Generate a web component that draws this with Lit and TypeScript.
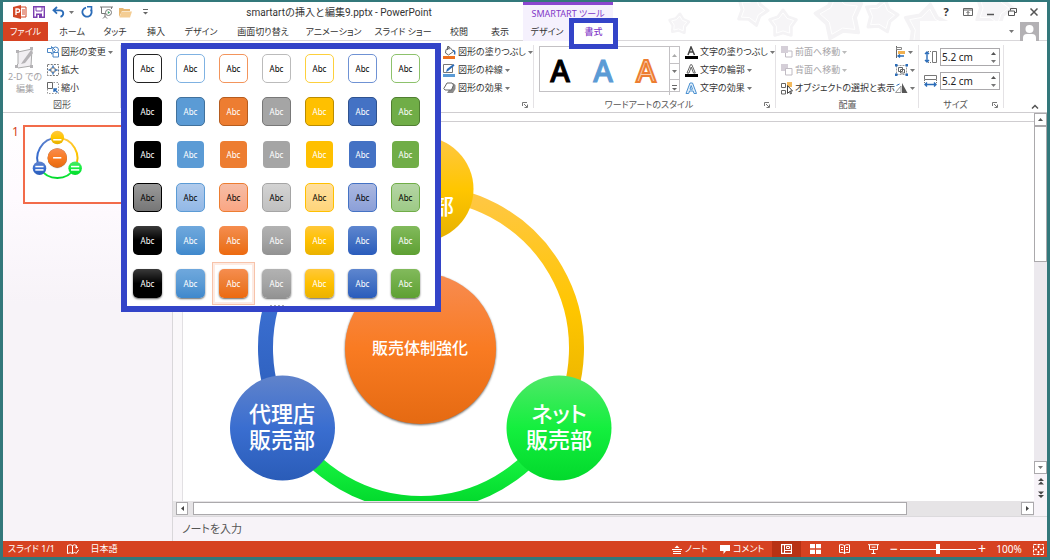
import { LitElement, html, svg, css, nothing } from "lit";
import { customElement, property } from "lit/decorators.js";
import { classMap } from "lit/directives/class-map.js";

const starPoints = (cx: number, cy: number, r: number, turn: number) =>
  Array.from({ length: 10 }, (_, i) => {
    const a = ((i * 36 - 90 + turn) * Math.PI) / 180;
    const d = i % 2 ? r * 0.62 : r;
    return `${(cx + d * Math.cos(a)).toFixed(1)},${(cy + d * Math.sin(a)).toFixed(1)}`;
  }).join(" ");

/* ---------- icons ---------- */
const icon = (w: number, h: number, body: unknown) =>
  html`<svg width=${w} height=${h} viewBox="0 0 ${w} ${h}" fill="none" aria-hidden="true">${body}</svg>`;

const caret = html`<svg class="caret" width="5" height="3" viewBox="0 0 5 3" aria-hidden="true"><path d="M0 0h5L2.5 3z" fill="currentColor" /></svg>`;
const caretUp = html`<svg width="5" height="3" viewBox="0 0 5 3" aria-hidden="true"><path d="M0 3h5L2.5 0z" fill="currentColor" /></svg>`;

const I = {
  ppt: icon(14, 14, svg`<path d="M0 2l8-2v14l-8-2z" fill="#d24726"/><path d="M8 2h5v10H8" stroke="#d24726"/><path d="M3 10V4h2a1.6 1.6 0 010 3.4H3" stroke="#fff" stroke-width="1.3"/><path d="M9 5h3M9 7h3M9 9h3" stroke="#d24726"/>`),
  save: icon(12, 12, svg`<path d="M.7.7h10.6v10.6H.7z" stroke="#7b3fb0" stroke-width="1.4"/><path d="M3 1h6v4H3z" fill="#fff" stroke="#7b3fb0"/><path d="M3 7.5h6V12H3z" fill="#7b3fb0"/><path d="M4.5 9h1.5v3H4.5z" fill="#fff"/>`),
  undo: icon(13, 12, svg`<path d="M5 1L1.5 4.3 5 7.6M2 4.3h6c4 0 4.5 5 .5 6.5" stroke="#2b6cb8" stroke-width="1.8"/>`),
  redo: icon(12, 12, svg`<path d="M9.8 3.5A4.6 4.6 0 115 1.6" stroke="#2b6cb8" stroke-width="1.8"/><path d="M6 .8h4.5v4.5" stroke="#2b6cb8" stroke-width="1.6"/>`),
  show: icon(13, 13, svg`<path d="M0 1h13M1.5 1v6.5H6M11.5 1v2M5 8v3M3 12.5l2-2 2 2" stroke="#777"/><circle cx="8.5" cy="6.5" r="3" fill="#fff" stroke="#777"/><path d="M7.8 5v3l2.4-1.5z" fill="#3b9b60"/>`),
  folder: icon(13, 11, svg`<path d="M0 10V1h4l1 1h6v2H3z" fill="#e8b873"/><path d="M2.5 4.5H13L11 10.5H.5z" fill="#f4cd93"/>`),
  more: icon(5, 6, svg`<path d="M0 .5h5" stroke="#666"/><path d="M0 3h5L2.5 5.5z" fill="#666"/>`),
  edit2d: icon(22, 25, svg`<path d="M4 6l14-3-1 17-13 2-2-2 2-2z" stroke="#aaa" fill="#f1eff2"/><path d="M17 4l-8 11-2 3 4-1 8-10z" fill="#b5b3b6"/><path d="M2 4h3v3H2zM16 1h3v3h-3zM16 19h3v3h-3zM1 19h3v3H1z" fill="#b5b3b6"/>`),
  change: icon(12, 12, svg`<path d="M.5 2.5h4v-2L8.500 4.500 4.500 8V6.500h-4z" stroke="#4a86c5" fill="#fff"/><circle cx="8.500" cy="4" r="3" stroke="#4a86c5"/><path d="M6 6.500h5.500v4.500H6z" stroke="#4a86c5" fill="#fff"/>`),
  grow: icon(12, 12, svg`<path d="M.5.5h11v11H.5z" stroke="#777" stroke-dasharray="2 1.2"/><path d="M4 4h4v4H4z" stroke="#777" fill="#fff"/><path d="M1.5 6H4M8 6h2.5M6 1.5V4M6 8v2.5" stroke="#2b6cb8" stroke-width="1.4"/>`),
  shrink: icon(12, 12, svg`<path d="M.5.5h11v11H.5z" stroke="#999" stroke-dasharray="1.5 1.5"/><path d="M.5.5h5v6h-5z" stroke="#666" fill="#fff"/><path d="M10.5 10.5L7 7M7 10V7h3" stroke="#2b6cb8" stroke-width="1.4"/>`),
  fill: icon(13, 13, svg`<path d="M3 3.5l4-2 3.5 4-5 3.5-3-2z" stroke="#666" fill="#fff"/><path d="M4.500 4V.5H6v3" stroke="#666"/><path d="M10 4.5c2 0 2 2 1.5 4" stroke="#2b6cb8" stroke-width="1.5"/><path d="M0 10h12v3H0z" fill="#ed7020"/>`),
  line: icon(13, 13, svg`<path d="M.5.5h9v8h-9z" stroke="#777"/><path d="M3 8l1-3 6.5-5 1 1.5L5 7z" fill="#2b6cb8"/><path d="M0 10h12v3H0z" fill="#5b9bd5"/>`),
  effect: icon(13, 12, svg`<path d="M4 11h6l2.5-4V3L10 1z" fill="#8b8b8b"/><path d="M4 1h5l1.5 2-2 5H2L.8 6.5z" fill="#fff" stroke="#666"/>`),
  txtFill: icon(13, 13, svg`<path d="M3 9L6 1l3.5 8M4 6h4.5" stroke="#444" stroke-width="1.5"/><path d="M0 10h13v3H0z" fill="#000"/>`),
  txtLine: icon(13, 13, svg`<path d="M2 9L5.5.7h1.3L10.3 9H8.500L6.2 3 4 9z" stroke="#666"/><path d="M0 10h13v3H0z" fill="#000"/>`),
  txtFx: icon(13, 13, svg`<path d="M1 11.5L5 1h2.5l4 10.5H9L8.2 9H4.5l-.8 2.5z" stroke="#4a90d0" fill="#e6f1fb"/><path d="M5 7.2h2.5L6.2 3.5z" stroke="#4a90d0" fill="#fff"/>`),
  front: icon(12, 12, svg`<path d="M0 0h7v7H0z" fill="#d5cfd8"/><path d="M7 5h4v6H4.5V7" stroke="#c0bbc3"/>`),
  back: icon(12, 12, svg`<path d="M0 0h7v7H0z" fill="#d5cfd8"/><path d="M4.5 4.5h6.5v6.5H4.5z" fill="#fff" stroke="#c0bbc3"/>`),
  pane: icon(12, 13, svg`<path d="M.5 1.5h4v4h-4zM.5 8.5h4v3.500h-4z" stroke="#666"/><path d="M6 0h5v5H6z" fill="#f3b95c"/><path d="M6.500 3.500v8l2-2 1 2.500 1-.5-1-2.500h2z" stroke="#444" fill="#fff"/>`),
  align: icon(11, 12, svg`<path d="M1.5 0v12" stroke="#666"/><path d="M1.500 1.500h5v2h-5z" stroke="#888"/><path d="M3 5h7v3H3z" fill="#f0b050"/><path d="M3 10h6M5 8.5L3 10l2 1.5" stroke="#2b6cb8" stroke-width="1.3"/>`),
  group: icon(13, 12, svg`<path d="M1.5 1.5h10v9h-10z" stroke="#999" stroke-dasharray="2 1"/><path d="M3.5 3.5h4v4h-4zM5.5 5.5h4v3.500h-4z" stroke="#666"/><path d="M0 0h2.5v2.5H0zM10.5 0H13v2.5h-2.5zM0 9.5h2.5V12H0zM10.5 9.5H13V12h-2.5z" fill="#2b6cb8"/>`),
  rotate: icon(13, 10, svg`<path d="M.5 9.5L6 3v6.5z" stroke="#999"/><path d="M7 0l5.5 10H7z" fill="#555"/><path d="M1.5 2.5L4.5 1" stroke="#2b6cb8"/>`),
  height: icon(13, 12, svg`<path d="M3 .5v11M1 3l2-2 2 2M1 9l2 2 2-2" stroke="#2b6cb8" stroke-width="1.4"/><path d="M8.5.5h4v11h-4z" stroke="#777"/><path d="M4 .5h4M4 11.5h4" stroke="#777" stroke-dasharray="1 1"/>`),
  width: icon(13, 12, svg`<path d="M.5.5h12v4H.5z" stroke="#777"/><path d="M.5 5v3M12.5 5v3" stroke="#777" stroke-dasharray="1 1"/><path d="M.5 9.500h12M3 7.500l-2 2 2 2M10 7.500l2 2-2 2" stroke="#2b6cb8" stroke-width="1.4"/>`),
  launch: icon(6, 6, svg`<path d="M.5 4V.5H5M2 2l3 3M5.5 2.5v3h-3" stroke="#777"/>`),
  ribbonOpt: icon(10, 8, svg`<path d="M.5.5h9v7h-9z" stroke="#666"/><path d="M.5 2h9M5 7V3.5M3.5 5L5 3.5 6.5 5" stroke="#666"/>`),
  min: icon(8, 8, svg`<path d="M1 6.500h7" stroke="#555" stroke-width="1.5"/>`),
  restore: icon(9, 8, svg`<path d="M2.5 2.5V.5h6v4h-2" stroke="#555"/><path d="M.5 3h6v4.500h-6z" stroke="#555"/>`),
  close: icon(8, 8, svg`<path d="M.5.5l7 7M7.5.5l-7 7" stroke="#555" stroke-width="1.500"/>`),
  up: icon(8, 5, svg`<path d="M1 4.500L4 1.500l3 3" stroke="#555" stroke-width="1.500"/>`),
  avatar: icon(19, 19, svg`<path d="M0 0h19v19H0z" fill="#b3b1b4"/><circle cx="9.500" cy="7" r="4" fill="#fff"/><path d="M3 19v-3q0-4 4-4h5q4 0 4 4v3z" fill="#fff"/>`),
  spell: icon(12, 11, svg`<path d="M.5 1.5q3-1.500 5 0v8q-2-1.500-5 0zM5.5 1.5q2-1.500 4 0v3M5.5 9.500l2-1" stroke="#fff"/><path d="M7.500 8l1.500 1.500L12 5.500M8 3l3 .5" stroke="#fff"/>`),
  notes: icon(10, 9, svg`<path d="M2.5 3L5 .5 7.5 3z" fill="#fff"/><path d="M0 4.500h10M1 6.500h8M1 8.500h8" stroke="#fff"/>`),
  comment: icon(10, 9, svg`<path d="M0 0h10v6H6L3.5 9V6H0z" fill="#fff"/>`),
  normal: icon(11, 10, svg`<path d="M.5.5h10v9H.5z" stroke="#fff" stroke-width="1.3"/><path d="M3.5 0v10M4 6.500h6" stroke="#fff"/><path d="M5.500 2.500h3v2h-3z" stroke="#fff"/>`),
  sorter: icon(11, 10, svg`<path d="M0 0h5v4.3H0zM6 0h5v4.3H6zM0 5.7h5V10H0zM6 5.7h5V10H6z" fill="#fff"/>`),
  read: icon(11, 10, svg`<path d="M.5.8q3-.6 5 .7 2-1.300 5-.7v7.700q-3-.6-5 .7-2-1.300-5-.7zM5.500 1.500V10M2 3.500h2M2 5.500h2M7 3.500h2M7 5.500h2" stroke="#fff"/>`),
  present: icon(11, 10, svg`<path d="M0 .7h11M1.500 1v4.500h8V1M3.500 3.200h4M5.500 6v3.500M3.500 9.500h4" stroke="#fff"/>`),
  fit: icon(11, 11, svg`<path d="M.5.5h10v10H.5z" stroke="#fff" stroke-dasharray="3 1"/><path d="M5.500 1.500V4M5.500 7v2.500M1.500 5.500H4M7 5.500h2.500" stroke="#fff" stroke-width="1.6"/>`),
  pageUp: icon(6, 7, svg`<path d="M0 3l3-3 3 3zM0 6.500l3-3 3 3z" fill="#444"/>`),
  pageDown: icon(6, 7, svg`<path d="M0 .5h6l-3 3zM0 4h6L3 7z" fill="#444"/>`),
  left: icon(3, 5, svg`<path d="M3 0v5L0 2.500z" fill="#444"/>`),
  right: icon(3, 5, svg`<path d="M0 0v5l3-2.500z" fill="#444"/>`),
};

/* ---------- the SmartArt cycle ---------- */
@customElement("cycle-diagram")
class CycleDiagram extends LitElement {
  @property({ type: Boolean }) preview = false;

  static styles = css`
    :host { display: block; overflow: hidden; }
    svg { display: block; width: 100%; height: 100%; }
    text { fill: #fff; text-anchor: middle; font-family: "Noto Sans CJK JP", sans-serif; font-weight: 500; }
    .node { font-size: 22px; }
    .core { font-size: 16px; }
    .shade { filter: drop-shadow(0 1px 1px rgba(0, 0, 0, 0.6)); }
  `;

  private grad(id: string, a: string, b: string, c: string) {
    return svg`<linearGradient id=${id} x1="0" y1="0" x2="0" y2="1"><stop offset="0" stop-color=${a}/><stop offset=".5" stop-color=${b}/><stop offset="1" stop-color=${c}/></linearGradient>`;
  }

  private label(cls: string, x: number, y: number, text: string) {
    return this.preview
      ? svg`<path d="M${x - 32} ${y - 7}h64" stroke="#fff" stroke-width="12"/>`
      : svg`<text class=${cls} x=${x} y=${y}>${text}</text>`;
  }

  render() {
    return html`<svg viewBox=${this.preview ? "-13 -14 1033 582" : nothing} preserveAspectRatio="xMinYMin" role="img" aria-label="SmartArt">
      <defs>
        ${this.grad("y", "#ffc746", "#ffc600", "#e5b000")}
        ${this.grad("b", "#6083cb", "#3a6ed0", "#2a5cb8")}
        ${this.grad("g", "#4fe868", "#14ef3e", "#02d92c")}
        ${this.grad("o", "#f78c52", "#f97b22", "#e56a12")}
      </defs>
      <g fill="none" stroke-width="15">
        <path d="M238 70.5A155.5 155.5 0 0 1 372.7 303.7" stroke="url(#y)" />
        <path d="M372.7 303.7A155.5 155.5 0 0 1 103.3 303.7" stroke="url(#g)" />
        <path d="M103.3 303.7A155.5 155.5 0 0 1 238 70.5" stroke="url(#b)" />
      </g>
      <circle class="shade" cx="237.5" cy="226.5" r="75.5" fill="url(#o)" />
      <circle cx="238" cy="67" r="52.5" fill="url(#y)" />
      <circle cx="376" cy="306" r="52.5" fill="url(#g)" />
      <circle cx="99.5" cy="306" r="52.5" fill="url(#b)" />
      ${this.label("core", 237, 232, "販売体制強化")}
      ${this.label("node", 238, 92, "販売部")}
      ${this.label("node", 376, 300, "ネット")}
      ${this.label("node", 376, 326, "販売部")}
      ${this.label("node", 99, 300, "代理店")}
      ${this.label("node", 99, 326, "販売部")}
    </svg>`;
  }
}

/* ---------- the shape style gallery ---------- */
const HUES = ["black", "sky", "orange", "gray", "gold", "blue", "green"];
const LOOKS = ["outline", "bordered", "flat", "subtle", "moderate", "intense"];

@customElement("style-gallery")
class StyleGallery extends LitElement {
  static styles = css`
    :host { display: block; background: #fff; border: 6px solid #3344c8; padding: 5px 15px 0 6px; }
    .grid { display: grid; grid-template-columns: repeat(7, 29px); gap: 14px; }
    button {
      position: relative; box-sizing: border-box; width: 29px; height: 29px; padding: 0; border: 1px solid var(--edge);
      border-radius: 5px; font: 8px/12px "Noto Sans", sans-serif; color: #fff; background: var(--base);
    }
    .black { --base: #000; --edge: #000; --hi: #3a3a3a; --lo: #000; --pa: #9a9a9a; --pb: #767676; --line: #222; --rim: #000; }
    .sky { --base: #5b9bd5; --edge: #5b9bd5; --hi: #6fa8dd; --lo: #3f88cc; --pa: #b1cbec; --pb: #92b8e6; --line: #7fb2e2; --rim: #41719c; }
    .orange { --base: #ed7d31; --edge: #ed7d31; --hi: #f68d4f; --lo: #ed6a10; --pa: #f6bda6; --pb: #faa683; --line: #f3955c; --rim: #b55c1f; }
    .gray { --base: #a5a5a5; --edge: #a5a5a5; --hi: #b2b2b2; --lo: #929292; --pa: #d3d3d3; --pb: #c0c0c0; --line: #bbb; --rim: #787878; }
    .gold { --base: #ffc000; --edge: #ffc000; --hi: #ffc83a; --lo: #eab200; --pa: #ffdf9f; --pb: #ffd57a; --line: #fdd03c; --rim: #ba8c00; }
    .blue { --base: #4472c4; --edge: #4472c4; --hi: #5e86cf; --lo: #2a5cbc; --pa: #abb8e0; --pb: #8b9fd8; --line: #6f92d4; --rim: #2f528f; }
    .green { --base: #70ad47; --edge: #70ad47; --hi: #82ba5c; --lo: #5ea033; --pa: #b5d5a5; --pb: #9dca86; --line: #8dc26c; --rim: #507e32; }
    .outline { background: #fff; color: #000; border-color: var(--line); }
    .bordered { border-color: var(--rim); }
    .flat { width: 27px; height: 27px; margin: 1px; border: 0; border-radius: 4px; }
    .subtle { color: #000; background: linear-gradient(var(--pa), var(--pb)); border-color: var(--edge); }
    .moderate { border: 0; background: linear-gradient(var(--hi), var(--base) 50%, var(--lo)); }
    .intense { border: 0; background: linear-gradient(var(--hi), var(--base) 50%, var(--lo)); box-shadow: 0 1px 2px rgba(0, 0, 0, 0.6); }
    .picked::after { content: ""; position: absolute; inset: -7px; border: 1px solid #f7c3aa; box-shadow: inset 0 0 0 2px #fdebe3; }
    .grip { height: 5px; display: flex; justify-content: center; align-items: flex-end; gap: 2px; margin-top: 3px; }
    .grip i { width: 2px; height: 1px; background: #aaa; }
  `;

  render() {
    return html`<div class="grid" role="group" aria-label="図形のスタイル">
        ${LOOKS.map((look) =>
          HUES.map(
            (hue) => html`<button class=${classMap({ [look]: true, [hue]: true, picked: look === "intense" && hue === "orange" })}>Abc</button>`
          )
        )}
      </div>
      <div class="grip"><i></i><i></i><i></i><i></i></div>`;
  }
}

/* ---------- the application window ---------- */
const TABS = ["ホーム", "タッチ", "挿入", "デザイン", "画面切り替え", "アニメーション", "スライド ショー", "校閲", "表示"];

@customElement("app-root")
class AppRoot extends LitElement {
  static styles = css`
    :host {
      position: relative; display: flex; flex-direction: column; box-sizing: border-box; height: 100vh;
      padding: 2px 3px 3px; background: #33787b; color: #333; overflow: hidden;
      font: 9px/14px "Noto Sans", "Noto Sans CJK JP", sans-serif; font-feature-settings: "palt";
    }
    button, input { font: inherit; font-feature-settings: inherit; color: inherit; background: none; border: 0; padding: 0; margin: 0; }
    button { display: inline-flex; align-items: center; white-space: nowrap; }
    svg { flex: none; }

    header { position: relative; background: #fff; border-bottom: 1px solid #d9d7da; }
    .stars { position: absolute; top: 0; right: 0; }
    .titlebar, .tabs { position: relative; display: flex; }
    .titlebar { height: 20px; }
    .tabs { height: 18px; }
    .qat { width: 145px; padding-left: 7px; display: flex; align-items: center; }
    .qat button { justify-content: center; width: 23px; }
    .qat .wide { width: 34px; gap: 4px; }
    .title { width: 368px; margin: 0; font: 400 10px/21px Roboto, "Noto Sans CJK JP", sans-serif; text-align: center; }
    .context { box-sizing: border-box; width: 90px; border-top: 3px solid #8a46cf; background: #f5f1fd; color: #8238c8; text-align: center; line-height: 17px; white-space: nowrap; }
    .window { flex: 1; display: flex; justify-content: flex-end; align-items: center; padding-right: 2px; }
    .window button { justify-content: center; width: 22px; font-size: 11px; font-weight: 700; }
    .tab { justify-content: center; }
    .tabs { display: grid; grid-template-columns: 45px 48px 38px 44px 46px 78px 63px 76px 36px 46px 48px 45px 1fr; }
    .file { background: #d64221; color: #fff; }
    .ctx { background: #f5f1fd; }
    .current { position: relative; background: #fff; color: #8238c8; font-weight: 500; }
    .current::after { content: ""; position: absolute; inset: -4px -2px -8px -2px; border: 5px solid #3344c8; z-index: 3; }
    .account { display: flex; justify-content: flex-end; align-items: center; gap: 6px; padding-right: 8px; }

    .ribbon { display: grid; grid-template-columns: 118px 413px 242px 143px 85px 1fr; height: 71px; background: #fff; border-bottom: 1px solid #cfcdd0; }
    .group { position: relative; display: grid; grid-template-rows: 54px 1fr; padding-top: 2px; }
    .group::after { content: ""; position: absolute; right: 0; top: 4px; bottom: 4px; border-right: 1px solid #e4e2e5; }
    .body { display: flex; min-width: 0; }
    .foot { display: flex; align-items: center; color: #555; }
    .foot span { flex: 1; text-align: center; line-height: 14px; }
    .foot button { width: 12px; }
    .stack { display: grid; grid-template-rows: repeat(3, 18px); justify-items: start; }
    .stack button { gap: 2px; }
    .stack .off { color: #a5a3a6; }
    .caret { color: #777; }
    .off .caret { color: #bbb; }
    .end { justify-content: flex-end; }
    .end .stack { width: 91px; }
    .large { flex-direction: column; width: 44px; padding-top: 3px; color: #a3a1a4; line-height: 12px; }
    .wordart { display: grid; grid-template-columns: 43px 43px 43px 10px; height: 44px; margin: 3px 5px 0 5px; border: 1px solid #c3c1c4; }
    .wordart .sample { justify-content: center; font: 500 30px/48px "Noto Sans", sans-serif; padding-right: 3px; }
    .black { color: #000; }
    .sky { color: #5b9bd5; }
    .sample.sky, .sample.black { -webkit-text-stroke: 1px currentColor; }
    .glow { color: #f8cbad; -webkit-text-stroke: 2px #ed7d31; }
    .steps { display: grid; grid-template-rows: 1fr 1fr 1fr; border-left: 1px solid #c3c1c4; }
    .steps button { justify-content: center; color: #aaa; }
    .steps button + button { border-top: 1px solid #c3c1c4; }
    .arrange { padding-left: 5px; }
    .arrange .stack:first-child { flex: 1; min-width: 0; }
    .arrange .stack:last-child { width: 24px; }
    .sizes { display: grid; align-content: start; gap: 6px; padding: 5px 4px 0 5px; }
    .size { display: flex; align-items: center; gap: 3px; }
    .size label { display: flex; }
    .spin { box-sizing: border-box; display: flex; flex: 1; height: 18px; border: 1px solid #aba9ac; color: #222; }
    .spin input { width: 46px; padding-left: 1px; font-size: 10px; }
    .arrows { display: grid; grid-template-rows: 1fr 1fr; flex: 1; color: #555; }
    .arrows button { justify-content: center; }
    .collapse { align-self: end; justify-self: end; padding: 0 8px 3px 0; }

    main { flex: 1; min-height: 0; display: grid; grid-template-columns: 170px 1fr; background: #fff; }
    .thumbs { display: flex; gap: 4px; padding: 12px 8px 0 9px; border-right: 1px solid #d9d7da; background: linear-gradient(#fff, #fefafe 85px, #f7f3f8 190px); color: #d64221; font-size: 12px; }
    .thumb { align-self: flex-start; flex: 1; height: 75px; border: 2px solid #f26b4a; background: #fff; }
    .editor { display: grid; grid-template-columns: 1fr 13px; grid-template-rows: minmax(0, 1fr) 15px 25px; background: #f7f3f8; }
    .stage { display: grid; grid-template-columns: 10px 1fr; grid-template-rows: 9px minmax(0, 1fr); background: #fff; }
    .rule { grid-column: 1 / 3; border-bottom: 1px solid #cfcdd0; }
    .gutter { border-right: 1px solid #e2e0e3; background: #faf8fa; }
    .vbar { grid-row: 1; grid-column: 2; display: grid; grid-template-rows: 13px 136fr 198fr 13px 14px 13px; background: #ece9ee; }
    .arrow, .grab { box-sizing: border-box; justify-content: center; border: 1px solid #aba9ac; background: #fff; color: #555; }
    .page { justify-content: center; background: #f7f3f8; }
    .hbar { display: grid; grid-template-columns: 12px 5px 714fr 114fr 13px; padding: 1px 0 1px 3px; background: #e6e4e6; }
    .notes { grid-column: 1 / 3; display: flex; align-items: center; border-top: 1px solid #dcdadd; font-size: 11px; }
    .notes input { flex: 1; padding-left: 9px; }
    .notes input::placeholder { color: #555; opacity: 1; }

    footer { display: flex; align-items: center; height: 16px; background: #d64221; color: #fff; }
    footer button { height: 16px; justify-content: center; }
    .slideno { width: 57px; padding-left: 5px; }
    .lang { width: 48px; }
    .check { width: 15px; }
    .push { margin-left: auto; }
    .pane { gap: 3px; width: 48px; justify-content: flex-start; padding-left: 3px; box-sizing: border-box; }
    .talk { width: 55px; gap: 3px; justify-content: flex-start; padding-left: 3px; box-sizing: border-box; }
    .view { width: 29px; }
    .view.on { background: #b83214; }
    .sign { width: 12px; font-size: 14px; }
    .zoom { appearance: none; width: 76px; height: 12px; background: linear-gradient(#fff, #fff) center / 100% 1px no-repeat; }
    .zoom::-webkit-slider-thumb { appearance: none; width: 4px; height: 10px; background: #fff; }
    .percent { width: 42px; font-size: 10px; }
    .fit { width: 17px; }

    .popup { position: absolute; left: 121px; top: 43px; z-index: 2; }
  `;

  private item(glyph: unknown, text: string, drop = true, off = false) {
    return html`<button class=${classMap({ off })}>${glyph}<span>${text}</span>${drop ? caret : nothing}</button>`;
  }

  private foot(text: string, launcher = true) {
    return html`<div class="foot"><span>${text}</span>${launcher ? html`<button aria-label="${text}の詳細">${I.launch}</button>` : nothing}</div>`;
  }

  private size(id: string, name: string, glyph: unknown) {
    return html`<div class="size">
      <label for=${id} aria-label=${name}>${glyph}</label>
      <div class="spin">
        <input id=${id} aria-label=${name} value="5.2 cm" />
        <div class="arrows"><button aria-label="増やす">${caretUp}</button><button aria-label="減らす">${caret}</button></div>
      </div>
    </div>`;
  }

  render() {
    const stars = [[52, 22, 10, 5], [125, 8, 16, 20], [156, 22, 14, 0], [213, 14, 25, -12], [254, 14, 17, 14], [300, 26, 24, 8], [366, 6, 20, 18]];
    return html`
      <header>
        <svg class="stars" width="420" height="38" viewBox="0 0 420 38" aria-hidden="true">
          ${stars.map(([x, y, r, t]) => svg`<polygon points=${starPoints(x, y, r, t)} fill="#f4f3f5" stroke="#f4f3f5" stroke-width="3" stroke-linejoin="round"/><polygon points=${starPoints(x, y, r * 0.8, t)} fill="#f6f5f7" stroke="#fff" stroke-linejoin="round"/>`)}
          <path d="M293 19h127v19H293z" fill="#fff" />
        </svg>
        <div class="titlebar">
          <div class="qat">
            <button aria-label="PowerPoint">${I.ppt}</button>
            <button aria-label="上書き保存">${I.save}</button>
            <button class="wide" aria-label="元に戻す">${I.undo}${caret}</button>
            <button aria-label="やり直し">${I.redo}</button>
            <button aria-label="スライド ショー">${I.show}</button>
            <button aria-label="開く">${I.folder}</button>
            <button aria-label="カスタマイズ">${I.more}</button>
          </div>
          <h1 class="title">smartartの挿入と編集9.pptx - PowerPoint</h1>
          <div class="context">SMARTART ツール</div>
          <div class="window">
            <button>?</button>
            <button aria-label="リボンの表示">${I.ribbonOpt}</button>
            <button aria-label="最小化">${I.min}</button>
            <button aria-label="元に戻す">${I.restore}</button>
            <button aria-label="閉じる">${I.close}</button>
          </div>
        </div>
        <nav class="tabs">
          <button class="tab file">ファイル</button>
          ${TABS.map((t) => html`<button class="tab">${t}</button>`)}
          <button class="tab ctx">デザイン</button>
          <button class="tab current">書式</button>
          <div class="account">${caret}${I.avatar}</div>
        </nav>
      </header>

      <section class="ribbon">
        <div class="group">
          <div class="body">
            <button class="large">${I.edit2d}<span>2-D での</span><span>編集</span></button>
            <div class="stack">
              ${this.item(I.change, "図形の変更")}
              ${this.item(I.grow, "拡大", false)}
              ${this.item(I.shrink, "縮小", false)}
            </div>
          </div>
          ${this.foot("図形", false)}
        </div>
        <div class="group">
          <div class="body end">
            <div class="stack">
              ${this.item(I.fill, "図形の塗りつぶし")}
              ${this.item(I.line, "図形の枠線")}
              ${this.item(I.effect, "図形の効果")}
            </div>
          </div>
          <div class="foot end"><button aria-label="図形のスタイルの詳細">${I.launch}</button></div>
        </div>
        <div class="group">
          <div class="body">
            <div class="wordart">
              <button class="sample black">A</button>
              <button class="sample sky">A</button>
              <button class="sample glow">A</button>
              <div class="steps"><button aria-label="前の行">${caretUp}</button><button aria-label="次の行">${caret}</button><button aria-label="その他">${I.more}</button></div>
            </div>
            <div class="stack">
              ${this.item(I.txtFill, "文字の塗りつぶし")}
              ${this.item(I.txtLine, "文字の輪郭")}
              ${this.item(I.txtFx, "文字の効果")}
            </div>
          </div>
          ${this.foot("ワードアートのスタイル")}
        </div>
        <div class="group">
          <div class="body arrange">
            <div class="stack">
              ${this.item(I.front, "前面へ移動", true, true)}
              ${this.item(I.back, "背面へ移動", true, true)}
              ${this.item(I.pane, "オブジェクトの選択と表示", false)}
            </div>
            <div class="stack">
              <button aria-label="配置">${I.align}${caret}</button>
              <button aria-label="グループ化">${I.group}${caret}</button>
              <button aria-label="回転">${I.rotate}${caret}</button>
            </div>
          </div>
          ${this.foot("配置", false)}
        </div>
        <div class="group">
          <div class="sizes">
            ${this.size("shape-height", "高さ", I.height)}
            ${this.size("shape-width", "幅", I.width)}
          </div>
          ${this.foot("サイズ")}
        </div>
        <button class="collapse" aria-label="リボンを折りたたむ">${I.up}</button>
      </section>

      <main>
        <aside class="thumbs">
          <span>1</span>
          <cycle-diagram class="thumb" preview></cycle-diagram>
        </aside>
        <section class="editor">
          <div class="stage">
            <div class="rule"></div>
            <div class="gutter"></div>
            <cycle-diagram></cycle-diagram>
          </div>
          <div class="vbar">
            <button class="arrow" aria-label="上へ">${caretUp}</button>
            <div class="grab"></div>
            <div></div>
            <button class="arrow" aria-label="下へ">${caret}</button>
            <button class="page" aria-label="前のスライド">${I.pageUp}</button>
            <button class="page" aria-label="次のスライド">${I.pageDown}</button>
          </div>
          <div class="hbar">
            <button class="arrow" aria-label="左へ">${I.left}</button>
            <div></div>
            <div class="grab"></div>
            <div></div>
            <button class="arrow" aria-label="右へ">${I.right}</button>
          </div>
          <div class="notes"><input aria-label="ノート" placeholder="ノートを入力" /></div>
        </section>
      </main>

      <footer>
        <span class="slideno">スライド 1/1</span>
        <button class="check" aria-label="スペル チェック">${I.spell}</button>
        <button class="lang">日本語</button>
        <button class="pane push">${I.notes}ノート</button>
        <button class="talk">${I.comment}コメント</button>
        <button class="view on" aria-label="標準">${I.normal}</button>
        <button class="view" aria-label="スライド一覧">${I.sorter}</button>
        <button class="view" aria-label="閲覧表示">${I.read}</button>
        <button class="view" aria-label="スライド ショー">${I.present}</button>
        <button class="sign" aria-label="縮小">−</button>
        <input class="zoom" type="range" min="0" max="100" value="50" aria-label="ズーム" />
        <button class="sign" aria-label="拡大">+</button>
        <button class="percent">100%</button>
        <button class="fit" aria-label="ウィンドウに合わせる">${I.fit}</button>
      </footer>

      <style-gallery class="popup"></style-gallery>
    `;
  }
}
